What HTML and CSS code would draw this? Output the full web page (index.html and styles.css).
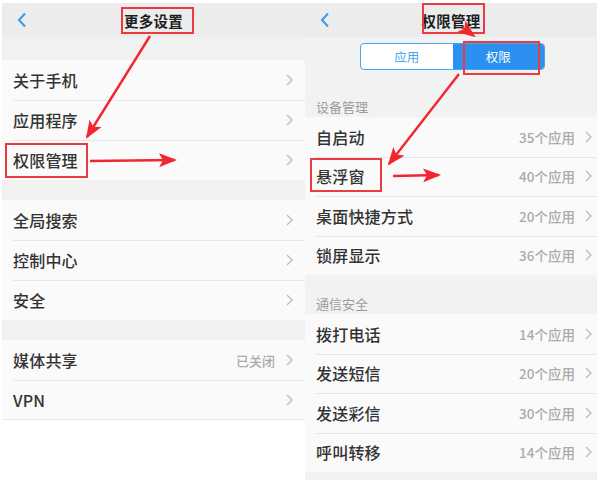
FILE: index.html
```html
<!DOCTYPE html>
<html lang="zh-CN">
<head>
  <meta charset="UTF-8">
  <title>更多设置 / 权限管理</title>
  <link rel="stylesheet" href="styles.css">
</head>
<body>
  <div class="screens">
    <!-- left screen: more settings -->
    <div class="phone phone-left">
      <div class="topbar">
        <svg class="back" viewBox="0 0 10 16"><path d="M8 1.5 L2 8 L8 14.5"/></svg>
        <div class="title">更多设置</div>
      </div>
      <div class="gap gap-top"></div>
      <div class="group">
        <div class="row"><span class="label">关于手机</span><svg class="chev" viewBox="0 0 7 12"><path d="M1 1 L6 6 L1 11"/></svg></div>
        <div class="row"><span class="label">应用程序</span><svg class="chev" viewBox="0 0 7 12"><path d="M1 1 L6 6 L1 11"/></svg></div>
        <div class="row"><span class="label">权限管理</span><svg class="chev" viewBox="0 0 7 12"><path d="M1 1 L6 6 L1 11"/></svg></div>
      </div>
      <div class="gap"></div>
      <div class="group">
        <div class="row"><span class="label">全局搜索</span><svg class="chev" viewBox="0 0 7 12"><path d="M1 1 L6 6 L1 11"/></svg></div>
        <div class="row"><span class="label">控制中心</span><svg class="chev" viewBox="0 0 7 12"><path d="M1 1 L6 6 L1 11"/></svg></div>
        <div class="row"><span class="label">安全</span><svg class="chev" viewBox="0 0 7 12"><path d="M1 1 L6 6 L1 11"/></svg></div>
      </div>
      <div class="gap"></div>
      <div class="group">
        <div class="row"><span class="label">媒体共享</span><span class="value">已关闭</span><svg class="chev" viewBox="0 0 7 12"><path d="M1 1 L6 6 L1 11"/></svg></div>
        <div class="row"><span class="label">VPN</span><svg class="chev" viewBox="0 0 7 12"><path d="M1 1 L6 6 L1 11"/></svg></div>
      </div>
    </div>

    <!-- right screen: permission management -->
    <div class="phone phone-right">
      <div class="topbar">
        <svg class="back" viewBox="0 0 10 16"><path d="M8 1.5 L2 8 L8 14.5"/></svg>
        <div class="title">权限管理</div>
      </div>
      <div class="seg-wrap">
        <div class="seg">
          <div class="seg-item">应用</div>
          <div class="seg-item active">权限</div>
        </div>
      </div>
      <div class="section-title first">设备管理</div>
      <div class="group">
        <div class="row"><span class="label">自启动</span><span class="value">35个应用</span><svg class="chev" viewBox="0 0 7 12"><path d="M1 1 L6 6 L1 11"/></svg></div>
        <div class="row"><span class="label">悬浮窗</span><span class="value">40个应用</span><svg class="chev" viewBox="0 0 7 12"><path d="M1 1 L6 6 L1 11"/></svg></div>
        <div class="row"><span class="label">桌面快捷方式</span><span class="value">20个应用</span><svg class="chev" viewBox="0 0 7 12"><path d="M1 1 L6 6 L1 11"/></svg></div>
        <div class="row"><span class="label">锁屏显示</span><span class="value">36个应用</span><svg class="chev" viewBox="0 0 7 12"><path d="M1 1 L6 6 L1 11"/></svg></div>
      </div>
      <div class="section-title">通信安全</div>
      <div class="group">
        <div class="row"><span class="label">拨打电话</span><span class="value">14个应用</span><svg class="chev" viewBox="0 0 7 12"><path d="M1 1 L6 6 L1 11"/></svg></div>
        <div class="row"><span class="label">发送短信</span><span class="value">20个应用</span><svg class="chev" viewBox="0 0 7 12"><path d="M1 1 L6 6 L1 11"/></svg></div>
        <div class="row"><span class="label">发送彩信</span><span class="value">30个应用</span><svg class="chev" viewBox="0 0 7 12"><path d="M1 1 L6 6 L1 11"/></svg></div>
        <div class="row"><span class="label">呼叫转移</span><span class="value">14个应用</span><svg class="chev" viewBox="0 0 7 12"><path d="M1 1 L6 6 L1 11"/></svg></div>
      </div>
    </div>
  </div>

  <!-- red annotation boxes -->
  <div class="mark mark-title-l"></div>
  <div class="mark mark-row-l"></div>
  <div class="mark mark-title-r"></div>
  <div class="mark mark-seg"></div>
  <div class="mark mark-row-r"></div>

  <!-- red annotation arrows -->
  <svg class="arrows" viewBox="0 0 600 480">
    <defs>
      <marker id="head" markerUnits="userSpaceOnUse" markerWidth="18" markerHeight="14" refX="16" refY="7" orient="auto">
        <path d="M0 0 L18 7 L0 14 L4 7 Z" fill="#f2262e"/>
      </marker>
    </defs>
    <line x1="150" y1="36" x2="87" y2="137" marker-end="url(#head)"/>
    <line x1="90" y1="161" x2="175" y2="160" marker-end="url(#head)"/>
    <line x1="462" y1="27" x2="474" y2="36" class="thin" marker-end="url(#head)"/>
    <line x1="459" y1="74" x2="389" y2="164" marker-end="url(#head)"/>
    <line x1="393" y1="176" x2="439" y2="175" marker-end="url(#head)"/>
  </svg>
</body>
</html>
```

FILE: styles.css
```css
* { margin: 0; padding: 0; box-sizing: border-box; }
body { background: #ffffff; font-family: "Noto Sans CJK SC", "Liberation Sans", sans-serif; color: #2e2e2e; width: 600px; height: 480px; overflow: hidden; position: relative; }

.screens { display: flex; padding: 3px 3px 0 2px; height: 480px; }
.phone { display: flex; flex-direction: column; }
.phone-left { width: 303px; background: #ffffff; }
.phone-right { width: 292px; background: #f2f2f2; }

.topbar { height: 34px; background: #ececec; display: flex; align-items: center; justify-content: center; position: relative; flex-shrink: 0; }
.topbar .back { position: absolute; left: 15px; top: 9px; width: 10px; height: 16px; fill: none; stroke: #3f97e6; stroke-width: 2; }
.topbar .title { font-size: 14.5px; font-weight: 700; color: #1e1e1e; letter-spacing: 0.3px; }

.gap { height: 20px; background: #f1f1f1; }
.gap-top { height: 23px; }

.group { background: #fafafa; }
.row { height: 40px; display: flex; align-items: center; padding: 0 12px 0 11px; position: relative; }
.row + .row::before { content: ""; position: absolute; left: 11px; right: 0; top: 0; border-top: 1px solid #e7e7e7; }
.group:last-child .row:last-child { border-bottom: 1px solid #e9e9e9; }
.label { font-size: 16px; font-weight: 500; flex: 1; color: #333333; letter-spacing: 0.2px; }
.value { font-size: 13px; font-weight: 500; color: #aaaaaa; margin-right: 11px; }
.chev { width: 7px; height: 12px; fill: none; stroke: #bdbdbd; stroke-width: 1.4; }

.phone-right .row { height: 39.5px; padding-right: 5px; }
.phone-right .value { font-size: 13.5px; margin-right: 10px; }
.phone-right .group:last-child .row:last-child { border-bottom: none; }

.seg-wrap { display: flex; justify-content: center; padding: 6px 0 0 3px; }
.seg { display: flex; width: 185px; height: 27px; border: 1.5px solid #4aa4ec; border-radius: 4px; overflow: hidden; background: #ffffff; }
.seg-item { flex: 1; display: flex; align-items: center; justify-content: center; font-size: 12.5px; color: #4aa4ec; }
.seg-item.active { background: #2b90f0; color: #ffffff; }

.section-title { height: 20px; line-height: 20px; font-size: 13px; color: #9c9c9c; padding-left: 11px; margin-top: 19px; }
.section-title.first { margin-top: 27px; }

.mark { position: absolute; border: 2px solid #ea3a42; }
.mark-title-l { left: 121px; top: 7px; width: 73px; height: 27px; }
.mark-row-l { left: 5px; top: 143px; width: 83px; height: 35px; }
.mark-title-r { left: 422px; top: 3px; width: 63px; height: 31px; }
.mark-seg { left: 463px; top: 41px; width: 77px; height: 34px; }
.mark-row-r { left: 310px; top: 158px; width: 72px; height: 34px; }

.arrows { position: absolute; left: 0; top: 0; width: 600px; height: 480px; pointer-events: none; }
.arrows line { stroke: #f2262e; stroke-width: 2.4; }
.arrows line.thin { stroke-width: 1.5; }
```
